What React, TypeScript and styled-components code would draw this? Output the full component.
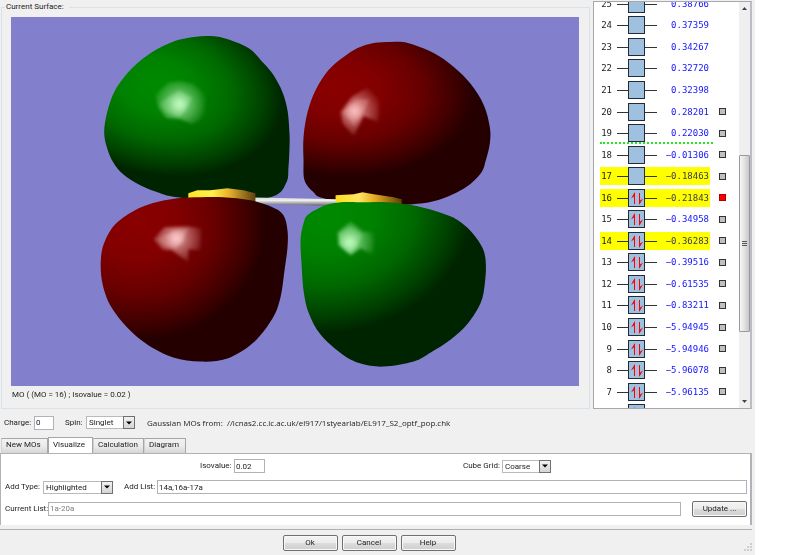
import React from "react";
import styled, { createGlobalStyle } from "styled-components";

const GlobalStyle = createGlobalStyle`
  *, *::before, *::after { box-sizing: border-box; }
  body {
    margin: 0;
    background: #fff;
    color: #1c1c1c;
    font: 8px/12px Roboto, "Liberation Sans", Arial, sans-serif;
  }
  button, input, select { font: inherit; color: inherit; margin: 0; }
`;

const Dialog = styled.main`
  margin-right: 45px;
  min-height: 100vh;
  background: #f0f0f0;
  display: flex;
  flex-direction: column;
`;

const TopArea = styled.div`
  display: flex;
  gap: 3px;
  padding: 1px 3px 0 1px;
`;

const SurfaceGroup = styled.fieldset`
  flex: 1;
  min-width: 0;
  margin: 0;
  padding: 4px 10px 7px 9px;
  border: 1px solid #d8e2ea;
`;

const GroupTitle = styled.legend`
  margin-left: -6px;
  padding: 0 5px 0 1px;
`;

const Viewport = styled.svg`
  display: block;
  width: 100%;
  height: auto;
  background: #8280cc;
`;

const SurfaceCaption = styled.p`
  margin: 3px 0 0 1px;
`;

const OrbitalPanel = styled.section`
  flex: none;
  contain: size;
  width: 159px;
  display: flex;
  background: #fff;
  border: 1px solid #a8a8ac;
  border-right: 2px solid #bcbcc4;
  overflow: hidden;
`;

const OrbitalList = styled.ol`
  flex: 1;
  height: 431px;
  margin: -9px 0 0;
  padding: 0 0 0 6px;
  list-style: none;
  display: grid;
  grid-auto-rows: 1fr;
`;

const OrbitalRow = styled.li<{ $frontier: boolean }>`
  position: relative;
  display: flex;
  align-items: center;
  gap: 9px;
  &::after {
    content: "";
    display: ${(p) => (p.$frontier ? "block" : "none")};
    position: absolute;
    left: 0;
    bottom: 0;
    width: 113px;
    border-bottom: 2px dotted #22e822;
  }
`;

const Level = styled.label<{ $lit: boolean }>`
  display: grid;
  grid-template-columns: 12px 40px 1fr;
  column-gap: 5px;
  align-items: center;
  width: 110px;
  height: 18px;
  padding-right: 1px;
  text-align: right;
  font: 9px/18px "DejaVu Sans Mono", "Liberation Mono", monospace;
  background: ${(p) => (p.$lit ? "#ffff00" : "transparent")};
`;

const Energy = styled.span<{ $lit: boolean }>`
  color: ${(p) => (p.$lit ? "#3a3a50" : "#1414ff")};
`;

const Mark = styled.input`
  appearance: none;
  width: 7px;
  height: 7px;
  margin: 0;
  border: 1px solid #333;
  background: #c0c0c0;
  &:checked { background: #f00; border-color: #a00; }
`;

const ScrollTrack = styled.div`
  width: 11px;
  display: flex;
  flex-direction: column;
  align-items: center;
  background: #efefef;
`;

const ScrollArrow = styled.button`
  flex: none;
  width: 11px;
  height: 12px;
  padding: 0;
  border: 0;
  background: none;
  display: grid;
  place-items: center;
`;

const ScrollSpace = styled.div<{ $grow: number }>`
  flex: ${(p) => p.$grow} 0 0;
`;

const ScrollThumb = styled.div`
  flex: 177 0 0;
  width: 11px;
  border: 1px solid #9a9a9a;
  border-radius: 1px;
  background: linear-gradient(90deg, #f6f6f6, #e4e4e4 45%, #c8c8cc);
  display: grid;
  place-items: center;
`;

const JobBar = styled.div`
  display: flex;
  align-items: center;
  padding: 7px 4px 7px;
`;

const Field = styled.div<{ $grow?: boolean; $start?: number }>`
  display: flex;
  align-items: center;
  flex: ${(p) => (p.$grow ? "1" : "none")};
  margin-left: ${(p) => p.$start ?? 0}px;
  white-space: nowrap;
`;

const FieldLabel = styled.label<{ $width: number }>`
  flex: none;
  width: ${(p) => p.$width}px;
`;

const TextBox = styled.input<{ $width?: number }>`
  width: ${(p) => (p.$width ? `${p.$width}px` : "auto")};
  flex: ${(p) => (p.$width ? "none" : "1")};
  min-width: 0;
  height: 14px;
  padding: 0 1px;
  border: 1px solid #b0b2b8;
  border-radius: 0;
  background: #fff;
  &:disabled { color: #808080; }
`;

const SelectFrame = styled.span<{ $width: number }>`
  display: grid;
  width: ${(p) => p.$width}px;
  height: 13px;
  > * { grid-area: 1 / 1; }
`;

const SelectBox = styled.select`
  appearance: none;
  width: 100%;
  height: 13px;
  padding: 0 12px 0 2px;
  border: 1px solid #b8bac0;
  border-radius: 0;
  background: #fff;
  line-height: 11px;
`;

const DropArrow = styled.span`
  justify-self: end;
  width: 12px;
  height: 13px;
  border: 1px solid #707070;
  background: linear-gradient(#f2f2f2, #d4d4d4);
  display: grid;
  place-items: center;
  pointer-events: none;
`;

const SourceText = styled.span`
  margin-left: 12px;
  font: 8px/12px "Open Sans", "Noto Sans", sans-serif;
  white-space: pre;
`;

const TabStrip = styled.div`
  display: flex;
  align-items: flex-end;
  padding-left: 1px;
  height: 16px;
`;

const Tab = styled.button<{ $active?: boolean; $width: number }>`
  width: ${(p) => p.$width}px;
  height: ${(p) => (p.$active ? 17 : 15)}px;
  margin-bottom: ${(p) => (p.$active ? -1 : 0)}px;
  padding: 0 0 1px 4px;
  text-align: left;
  border: 1px solid #a4a6ac;
  border-bottom: 0;
  border-left-color: ${(p) => (p.$active ? "#a4a6ac" : "#d0d0d4")};
  background: ${(p) => (p.$active ? "#fff" : "linear-gradient(#f2f2f2, #ebebeb 50%, #d6d6d6)")};
`;

const TabPanel = styled.section`
  margin-right: 3px;
  padding: 5px 3px 8px 4px;
  display: flex;
  flex-direction: column;
  gap: 6px;
  border: 1px solid #b0b2b8;
  border-width: 1px 2px 0 1px;
  background: #fff;
`;

const FormRow = styled.div`
  display: flex;
  align-items: center;
  min-height: 15px;
`;

const PushButton = styled.button`
  width: 55px;
  height: 16px;
  padding: 0;
  border: 1px solid #707070;
  border-radius: 2px;
  background: linear-gradient(#f3f3f3, #ebebeb 50%, #dcdcdc 51%, #cfcfcf);
  box-shadow: inset 0 0 0 1px #f8f8f8;
  line-height: 12px;
`;

const Footer = styled.footer`
  flex: 1;
  margin: 4px 3px 0 0;
  padding: 5px 0 4px;
  border-top: 1px solid #b0b0b4;
  display: grid;
  grid-template-columns: 12px 1fr 26px;
  align-items: start;
`;

const FooterButtons = styled.div`
  grid-column: 2;
  display: flex;
  justify-content: center;
  gap: 4px;
`;

const Grip = styled.svg`
  justify-self: end;
  align-self: end;
  width: 8px;
  height: 8px;
`;

type Orbital = { n: number; energy: string; filled: boolean };

const energies: [number, string][] = [
  [25, "0.38766"], [24, "0.37359"], [23, "0.34267"], [22, "0.32720"], [21, "0.32398"],
  [20, "0.28201"], [19, "0.22030"], [18, "−0.01306"], [17, "−0.18463"], [16, "−0.21843"],
  [15, "−0.34958"], [14, "−0.36283"], [13, "−0.39516"], [12, "−0.61535"], [11, "−0.83211"],
  [10, "−5.94945"], [9, "−5.94946"], [8, "−5.96078"], [7, "−5.96135"], [6, "−5.97012"],
];

const orbitals: Orbital[] = energies.map(([n, energy]) => ({ n, energy, filled: n <= 16 }));
const highlighted = [17, 16, 14];

function LevelDiagram({ filled }: { filled: boolean }) {
  return (
    <svg width="40" height="18" viewBox="0 0 40 18" aria-hidden="true">
      <path d="M0 9.5H40" stroke="#333" />
      <rect x="11.5" y=".5" width="16" height="17" fill="#a0c0e0" stroke="#222c38" />
      {filled && (
        <g fill="#f00">
          <path d="M17 15V7.500L14 9.500L17.500 3.500H18V15Z" />
          <path d="M22 4H23V11.500L26 9.500L22.500 15.500H22Z" />
        </g>
      )}
    </svg>
  );
}

type Point = [number, number];

/** Closed Catmull-Rom outline through the given points. */
function smooth(points: Point[]) {
  const n = points.length;
  const at = (i: number) => points[(i + n) % n];
  let d = `M${points[0][0]} ${points[0][1]}`;
  for (let i = 0; i < n; i++) {
    const [a, b, c, e] = [at(i - 1), at(i), at(i + 1), at(i + 2)];
    d += `C${b[0] + (c[0] - a[0]) / 6} ${b[1] + (c[1] - a[1]) / 6} ${c[0] - (e[0] - b[0]) / 6} ${c[1] - (e[1] - b[1]) / 6} ${c[0]} ${c[1]}`;
  }
  return d + "Z";
}

const lobes: Record<string, Point[]> = {
  topLeft: [[205, 36], [223, 38], [248, 48], [263, 63], [273, 75], [282, 92], [287, 110], [289, 133], [289, 148], [288, 167], [286, 182], [273, 196], [230, 202], [177, 197], [160, 193], [140, 185], [123, 174], [113, 162], [107, 148], [104, 132], [107, 112], [115, 90], [132, 68], [152, 52], [172, 42], [187, 38]],
  topRight: [[390, 42], [407, 43], [433, 53], [453, 67], [470, 84], [483, 105], [489, 127], [489, 143], [485, 160], [480, 173], [465, 187], [440, 199], [412, 204], [365, 205], [323, 198], [313, 192], [304, 180], [303, 160], [303, 137], [307, 112], [315, 90], [328, 70], [343, 57], [357, 48], [373, 43]],
  bottomLeft: [[200, 197], [177, 198], [152, 203], [133, 211], [115, 224], [105, 240], [101, 255], [101, 275], [105, 293], [112, 308], [127, 327], [147, 344], [173, 357], [200, 361], [227, 358], [253, 342], [272, 318], [280, 297], [284, 270], [287, 247], [287, 230], [283, 215], [272, 207], [250, 200], [223, 197]],
  bottomRight: [[360, 202], [387, 202], [417, 206], [447, 215], [460, 222], [472, 233], [482, 248], [485, 263], [484, 283], [480, 302], [467, 323], [450, 339], [430, 352], [413, 361], [383, 366], [360, 363], [342, 354], [320, 334], [308, 312], [303, 290], [301, 263], [300, 240], [303, 223], [308, 214], [325, 205], [340, 202]],
};

function Shade({ id, tone, cx, cy, rx, ry, turn = 0 }: { id: string; tone: "red" | "green"; cx: number; cy: number; rx: number; ry: number; turn?: number }) {
  const color = (v: number) => (tone === "red" ? `rgb(${v},0,0)` : `rgb(0,${v},0)`);
  return (
    <radialGradient id={id} gradientUnits="userSpaceOnUse" cx="0" cy="0" r="1" gradientTransform={`translate(${cx} ${cy}) rotate(${turn}) scale(${rx} ${ry})`}>
      <stop offset="0" stopColor={color(138)} />
      <stop offset=".3" stopColor={color(130)} />
      <stop offset=".6" stopColor={color(104)} />
      <stop offset=".85" stopColor={color(64)} />
      <stop offset="1" stopColor={color(36)} />
    </radialGradient>
  );
}

function Glint({ id, cx, cy, r, color }: { id: string; cx: number; cy: number; r: number; color: string }) {
  return (
    <radialGradient id={id} gradientUnits="userSpaceOnUse" cx={cx} cy={cy} r={r}>
      <stop offset="0" stopColor={color} stopOpacity=".95" />
      <stop offset=".35" stopColor={color} stopOpacity=".5" />
      <stop offset=".75" stopColor={color} stopOpacity=".2" />
      <stop offset="1" stopColor={color} stopOpacity="0" />
    </radialGradient>
  );
}

function SurfaceView() {
  return (
    <Viewport viewBox="11 17 567 368" role="img" aria-label="Molecular orbital 16 surface">
      <defs>
        <Shade id="shTL" tone="green" cx={158} cy={86} rx={126} ry={88} turn={12} />
        <Shade id="shTR" tone="red" cx={338} cy={88} rx={136} ry={88} turn={4} />
        <Shade id="shBL" tone="red" cx={138} cy={224} rx={128} ry={116} />
        <Shade id="shBR" tone="green" cx={328} cy={216} rx={144} ry={116} turn={-8} />
        <Glint id="glTL" cx={179} cy={104} r={28} color="#c8ffc8" />
        <Glint id="glTR" cx={354} cy={111} r={28} color="#ffc4c4" />
        <Glint id="glBL" cx={176} cy={238} r={29} color="#ffd0d0" />
        <Glint id="glBR" cx={349} cy={242} r={27} color="#c4ffc4" />
        <filter id="soften" x="-20%" y="-20%" width="140%" height="140%">
          <feGaussianBlur stdDeviation="1.5" />
        </filter>
        <linearGradient id="goldL">
          <stop offset="0" stopColor="#ffe62a" />
          <stop offset=".35" stopColor="#fff04a" />
          <stop offset=".6" stopColor="#e8b42c" />
          <stop offset="1" stopColor="#5c4010" />
        </linearGradient>
        <linearGradient id="goldR">
          <stop offset="0" stopColor="#ffdc20" />
          <stop offset=".35" stopColor="#ffe860" />
          <stop offset=".6" stopColor="#e4a820" />
          <stop offset="1" stopColor="#5c4008" />
        </linearGradient>
        <linearGradient id="rod" x1="0" y1="0" x2="0" y2="1">
          <stop offset="0" stopColor="#d8d8d8" />
          <stop offset=".35" stopColor="#eee" />
          <stop offset="1" stopColor="#555" />
        </linearGradient>
      </defs>
      <path d={smooth(lobes.topLeft)} fill="url(#shTL)" />
      <path d={smooth(lobes.topRight)} fill="url(#shTR)" />
      <path d="M250 197L338 199V206L250 203Z" fill="url(#rod)" />
      <path d="M188 193L197 190L210 190L227 188L243 190L255 193V203H188Z" fill="url(#goldL)" />
      <path d="M335 195L353 194L362 192L373 194L393 197L401 199V206H335Z" fill="url(#goldR)" />
      <path d={smooth(lobes.bottomLeft)} fill="url(#shBL)" />
      <path d={smooth(lobes.bottomRight)} fill="url(#shBR)" />
      <g filter="url(#soften)">
        <path d="M155 95L168 82L180 81L194 84L206 95L204 118L192 124L180 119L166 118L158 108Z" fill="url(#glTL)" />
        <path d="M159 103L179 90L192 98L184 112L179 117L165 112Z" fill="url(#glTL)" opacity=".6" />
        <path d="M340 112L351 97L367 87L379 100L378 122L363 116L353 136L342 123Z" fill="url(#glTR)" />
        <path d="M342 112L356 99L369 99L364 110L353 126Z" fill="url(#glTR)" opacity=".6" />
        <path d="M153 239L164 227L188 226L201 228L200 250L188 249L188 262L172 250L162 249Z" fill="url(#glBL)" />
        <path d="M155 239L172 231L188 228L182 242L175 248L163 245Z" fill="url(#glBL)" opacity=".6" />
        <path d="M337 232L350 221L362 231L374 232L373 255L360 248L350 255L338 245Z" fill="url(#glBR)" />
        <path d="M338 234L350 226L362 235L357 245L350 254L339 244Z" fill="url(#glBR)" opacity=".6" />
      </g>
    </Viewport>
  );
}

function Combo({ id, width, value, options }: { id: string; width: number; value: string; options: string[] }) {
  return (
    <SelectFrame $width={width}>
      <SelectBox id={id} defaultValue={value}>
        {options.map((o) => <option key={o}>{o}</option>)}
      </SelectBox>
      <DropArrow>
        <svg width="6" height="4" viewBox="0 0 6 4"><path d="M0 .5H6L3 3.5Z" fill="#000" /></svg>
      </DropArrow>
    </SelectFrame>
  );
}

export default function App() {
  return (
    <>
      <GlobalStyle />
      <Dialog>
        <TopArea>
          <SurfaceGroup>
            <GroupTitle>Current Surface:</GroupTitle>
            <SurfaceView />
            <SurfaceCaption>MO ( (MO = 16) ; Isovalue = 0.02 )</SurfaceCaption>
          </SurfaceGroup>
          <OrbitalPanel aria-label="Molecular orbitals">
            <OrbitalList>
              {orbitals.map(({ n, energy, filled }) => {
                const lit = highlighted.includes(n);
                return (
                  <OrbitalRow key={n} $frontier={n === 19}>
                    <Level $lit={lit} htmlFor={`mo-${n}`}>
                      <span>{n}</span>
                      <LevelDiagram filled={filled} />
                      <Energy $lit={lit}>{energy}</Energy>
                    </Level>
                    {n <= 20 && <Mark id={`mo-${n}`} type="checkbox" defaultChecked={n === 16} />}
                  </OrbitalRow>
                );
              })}
            </OrbitalList>
            <ScrollTrack>
              <ScrollArrow aria-label="Scroll up">
                <svg width="5" height="3" viewBox="0 0 5 3"><path d="M0 3H5L2.500 0Z" fill="#444" /></svg>
              </ScrollArrow>
              <ScrollSpace $grow={142} />
              <ScrollThumb>
                <svg width="5" height="7" viewBox="0 0 5 7"><path d="M0 1.500H5M0 3.500H5M0 5.500H5" stroke="#555" /></svg>
              </ScrollThumb>
              <ScrollSpace $grow={64} />
              <ScrollArrow aria-label="Scroll down">
                <svg width="5" height="3" viewBox="0 0 5 3"><path d="M0 0H5L2.500 3Z" fill="#444" /></svg>
              </ScrollArrow>
            </ScrollTrack>
          </OrbitalPanel>
        </TopArea>

        <JobBar>
          <Field>
            <FieldLabel $width={30} htmlFor="charge">Charge:</FieldLabel>
            <TextBox id="charge" $width={20} defaultValue="0" />
          </Field>
          <Field $start={11}>
            <FieldLabel $width={21} htmlFor="spin">Spin:</FieldLabel>
            <Combo id="spin" width={49} value="Singlet" options={["Singlet", "Triplet"]} />
          </Field>
          <SourceText>Gaussian MOs from:  //icnas2.cc.ic.ac.uk/el917/1styearlab/EL917_S2_optf_pop.chk</SourceText>
        </JobBar>

        <TabStrip role="tablist">
          <Tab role="tab" $width={47}>New MOs</Tab>
          <Tab role="tab" aria-selected="true" $active $width={45}>Visualize</Tab>
          <Tab role="tab" $width={51}>Calculation</Tab>
          <Tab role="tab" $width={42}>Diagram</Tab>
        </TabStrip>
        <TabPanel role="tabpanel">
          <FormRow>
            <Field $start={195}>
              <FieldLabel $width={34} htmlFor="iso">Isovalue:</FieldLabel>
              <TextBox id="iso" $width={31} defaultValue="0.02" />
            </Field>
            <Field $start={198}>
              <FieldLabel $width={39} htmlFor="grid">Cube Grid:</FieldLabel>
              <Combo id="grid" width={49} value="Coarse" options={["Coarse", "Medium", "Fine"]} />
            </Field>
          </FormRow>
          <FormRow>
            <Field>
              <FieldLabel $width={38} htmlFor="type">Add Type:</FieldLabel>
              <Combo id="type" width={70} value="Highlighted" options={["Highlighted", "All"]} />
            </Field>
            <Field $grow $start={11}>
              <FieldLabel $width={33} htmlFor="add">Add List:</FieldLabel>
              <TextBox id="add" defaultValue="14a,16a-17a" />
            </Field>
          </FormRow>
          <FormRow>
            <Field $grow>
              <FieldLabel $width={43} htmlFor="current">Current List:</FieldLabel>
              <TextBox id="current" defaultValue="1a-20a" disabled />
            </Field>
            <Field $start={11}>
              <PushButton>Update ...</PushButton>
            </Field>
          </FormRow>
        </TabPanel>

        <Footer>
          <FooterButtons>
            <PushButton>Ok</PushButton>
            <PushButton>Cancel</PushButton>
            <PushButton>Help</PushButton>
          </FooterButtons>
          <Grip viewBox="0 0 8 8" aria-hidden="true">
            <path d="M6 0h2v2h-2zM3 3h2v2h-2zM6 3h2v2h-2zM0 6h2v2h-2zM3 6h2v2h-2zM6 6h2v2h-2z" fill="#cfcfcf" />
          </Grip>
        </Footer>
      </Dialog>
    </>
  );
}
